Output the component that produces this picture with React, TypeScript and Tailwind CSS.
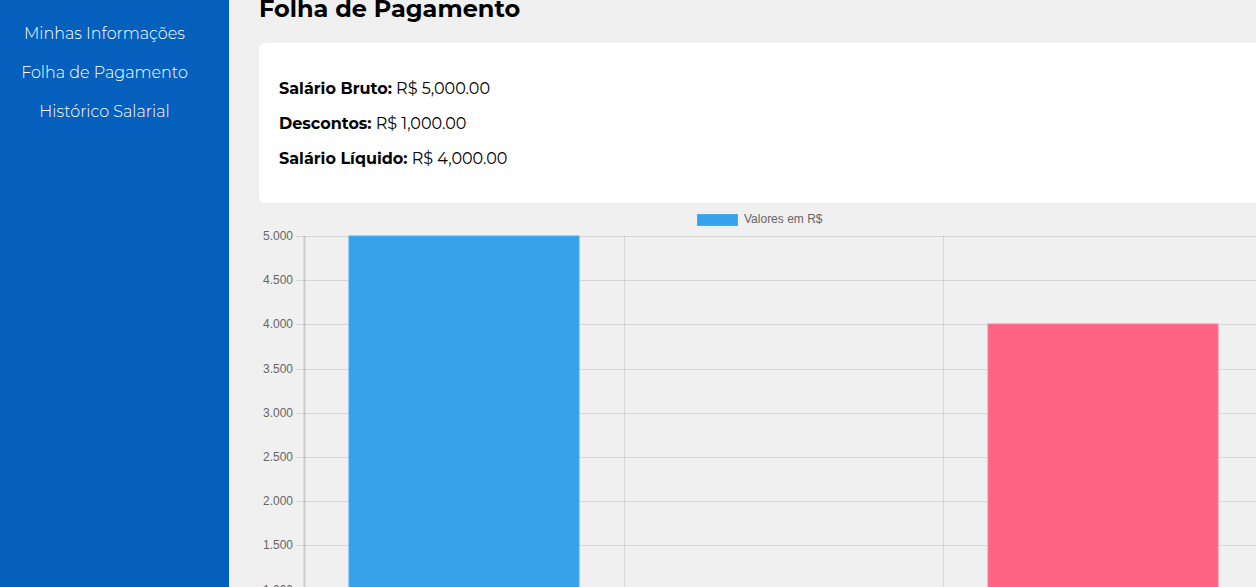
const yTicks = [5000, 4500, 4000, 3500, 3000, 2500, 2000, 1500, 1000, 500, 0]

// chart coords are local: page x - 259, page y - 208
const X0 = 45
const TOP = 28
const STEP = 44.2
const yFor = (v: number) => TOP + ((5000 - v) / 500) * STEP
const fmt = (v: number) => v.toLocaleString("pt-BR")

const bars = [
    { x: 90, value: 5000, fill: "#36a2eb", stroke: "#4aacef" },
    { x: 409.5, value: 1000, fill: "#ffce56", stroke: "#ffd66e" },
    { x: 729, value: 4000, fill: "#ff6384", stroke: "#ff7a95" },
]

function SalaryChart() {
    const bottom = yFor(0)
    return (
        <svg width="1100" height="480" className="block overflow-visible" style={{ fontFamily: "'Liberation Sans', Arial, sans-serif" }}>
            {/* legend */}
            <rect x={438.5} y={6.5} width={40} height={11} fill="#36a2eb" stroke="#4aacef" />
            <text x={485} y={15} fontSize="12" fill="#666">Valores em R$</text>

            {/* horizontal grid + ticks */}
            {yTicks.map((v) => (
                <g key={v}>
                    <line x1={X0 - 8} x2={1100} y1={Math.round(yFor(v)) + 0.5} y2={Math.round(yFor(v)) + 0.5} stroke="rgba(0,0,0,0.1)" />
                    <text x={X0 - 11} y={Math.round(yFor(v)) + 4} fontSize="12" fill="#666" textAnchor="end">{fmt(v)}</text>
                </g>
            ))}

            {/* vertical grid */}
            {[X0, 364.5, 684, 1003.5].map((x, i) => (
                <line key={x} x1={Math.round(x) + 0.5} x2={Math.round(x) + 0.5} y1={TOP} y2={bottom + 8} stroke={i === 0 ? "rgba(0,0,0,0.15)" : "rgba(0,0,0,0.1)"} strokeWidth={i === 0 ? 2 : 1} />
            ))}

            {/* bars */}
            {bars.map((b) => (
                <rect key={b.x} x={b.x} y={Math.round(yFor(b.value))} width={230} height={bottom - Math.round(yFor(b.value))} fill={b.fill} stroke={b.stroke} strokeWidth={1} />
            ))}
        </svg>
    )
}

export default function App() {
    return (
        <div className="flex h-[587px] overflow-hidden bg-[#f0f0f0]" style={{ fontFamily: "Montserrat, 'Open Sans', sans-serif" }}>
            {/* Sidebar */}
            <aside className="w-[229px] shrink-0 bg-[#055fbd] pr-5 text-white">
                <nav className="flex flex-col items-center gap-[21px] pt-[25px] text-[16px] font-light leading-[18px]">
                    <a>Minhas Informações</a>
                    <a>Folha de Pagamento</a>
                    <a>Histórico Salarial</a>
                </nav>
            </aside>

            {/* Content */}
            <main className="flex-1 pl-[30px] -mt-[7px]">
                <h1 className="text-[24px] font-bold leading-[32px] text-black">Folha de Pagamento</h1>

                <section className="mt-[18px] flex flex-col gap-4 rounded-l-md bg-white px-5 pt-[36px] pb-[35px] text-[16px] leading-[19px] text-black">
                    <p><strong>Salário Bruto:</strong> R$ 5,000.00</p>
                    <p><strong>Descontos:</strong> R$ 1,000.00</p>
                    <p><strong>Salário Líquido:</strong> R$ 4,000.00</p>
                </section>

                <div className="mt-[5px]">
                    <SalaryChart />
                </div>
            </main>
        </div>
    )
}
